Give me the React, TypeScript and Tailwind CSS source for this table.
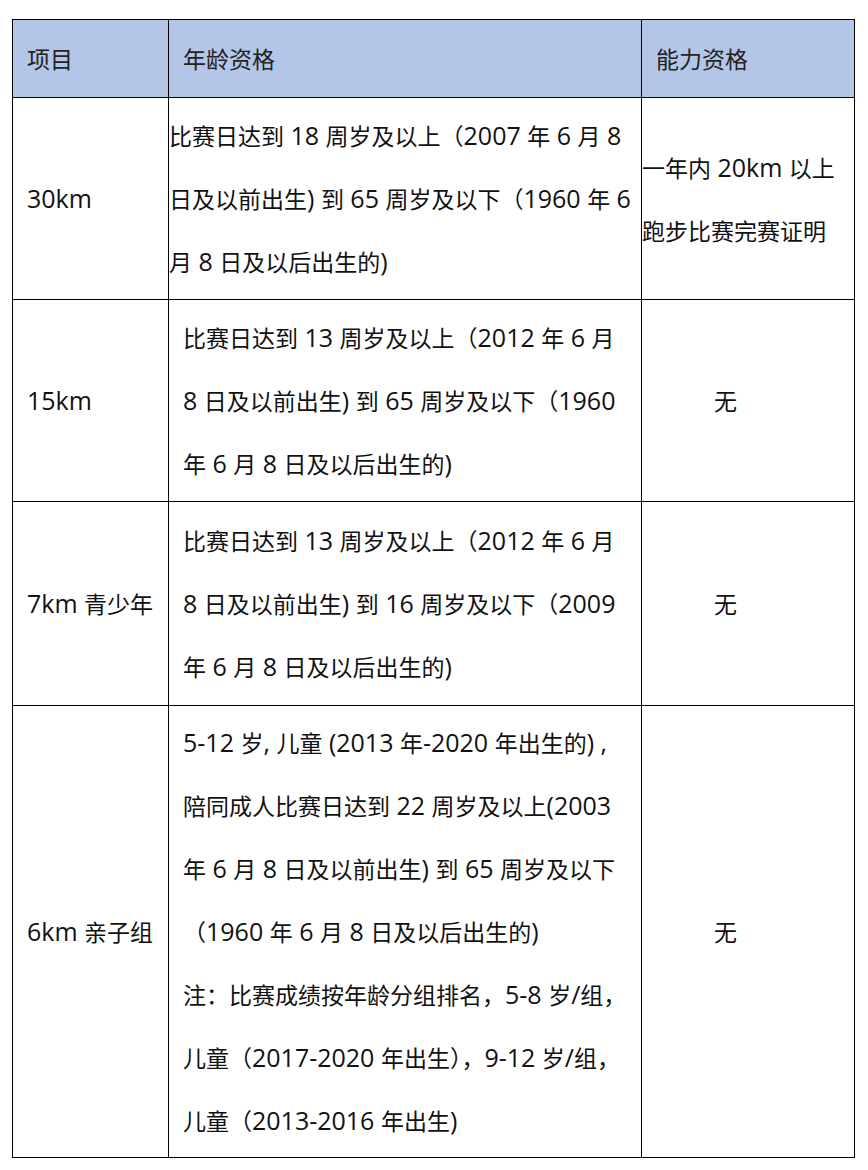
import React from "react";

// CJK runs are set a little smaller than the Latin runs, as in the source document
const CJK = /([\u2E80-\u9FFF\u3000-\u303F\uFF00-\uFFEF]+)/;

function Mixed({ text }: { text: string }) {
  return (
    <>
      {text.split(CJK).map((part, i) =>
        i % 2 === 1 ? (
          <span key={i} className="text-[23px]">
            {part}
          </span>
        ) : (
          <React.Fragment key={i}>{part}</React.Fragment>
        )
      )}
    </>
  );
}

function Lines({ lines }: { lines: string[] }) {
  return (
    <div>
      {lines.map((line, i) => (
        <div key={i} className="whitespace-nowrap leading-[62px]">
          <Mixed text={line} />
        </div>
      ))}
    </div>
  );
}

const rows = [
  {
    name: "30km",
    height: "h-[202px]",
    agePad: "pl-0",
    age: [
      "比赛日达到 18 周岁及以上（2007 年 6 月 8",
      "日及以前出生) 到 65 周岁及以下（1960 年 6",
      "月 8 日及以后出生的)",
    ],
    ability: ["一年内 20km 以上", "跑步比赛完赛证明"],
  },
  {
    name: "15km",
    height: "h-[202px]",
    agePad: "pl-[14px]",
    age: [
      "比赛日达到 13 周岁及以上（2012 年 6 月",
      "8 日及以前出生) 到 65 周岁及以下（1960",
      "年 6 月 8 日及以后出生的)",
    ],
    ability: null,
  },
  {
    name: "7km 青少年",
    height: "h-[204px]",
    agePad: "pl-[14px]",
    age: [
      "比赛日达到 13 周岁及以上（2012 年 6 月",
      "8 日及以前出生) 到 16 周岁及以下（2009",
      "年 6 月 8 日及以后出生的)",
    ],
    ability: null,
  },
  {
    name: "6km 亲子组",
    height: "h-[452px]",
    agePad: "pl-[14px]",
    age: [
      "5-12 岁, 儿童 (2013 年-2020 年出生的) ,",
      "陪同成人比赛日达到 22 周岁及以上(2003",
      "年 6 月 8 日及以前出生) 到 65 周岁及以下",
      "（1960 年 6 月 8 日及以后出生的)",
      "注：比赛成绩按年龄分组排名，5-8 岁/组，",
      "儿童（2017-2020 年出生），9-12 岁/组，",
      "儿童（2013-2016 年出生)",
    ],
    ability: null,
  },
];

export default function App() {
  return (
    <div
      className="min-h-[1170px] w-[868px] bg-white pl-[12px] pt-[19px] text-[25px] text-[#111]"
      style={{ fontFamily: '"Open Sans", "Noto Sans CJK SC", sans-serif' }}
    >
      <table className="w-[842px] table-fixed border-collapse border border-black">
        <colgroup>
          <col className="w-[156px]" />
          <col className="w-[473px]" />
          <col className="w-[213px]" />
        </colgroup>
        <thead>
          <tr className="h-[78px] bg-[#b4c6e7] text-[#222]">
            <th className="border border-black pl-[14px] text-left align-middle font-normal">
              <Mixed text="项目" />
            </th>
            <th className="border border-black pl-[14px] text-left align-middle font-normal">
              <Mixed text="年龄资格" />
            </th>
            <th className="border border-black pl-[14px] text-left align-middle font-normal">
              <Mixed text="能力资格" />
            </th>
          </tr>
        </thead>
        <tbody>
          {rows.map((row) => (
            <tr key={row.name} className={row.height}>
              <td className="border border-black pl-[14px] align-middle">
                <div className="whitespace-nowrap">
                  <Mixed text={row.name} />
                </div>
              </td>
              <td className={`overflow-hidden border border-black align-middle ${row.agePad}`}>
                <Lines lines={row.age} />
              </td>
              <td className="overflow-hidden border border-black align-middle">
                {row.ability ? (
                  <Lines lines={row.ability} />
                ) : (
                  <div className="pl-[72px]">
                    <Mixed text="无" />
                  </div>
                )}
              </td>
            </tr>
          ))}
        </tbody>
      </table>
    </div>
  );
}
